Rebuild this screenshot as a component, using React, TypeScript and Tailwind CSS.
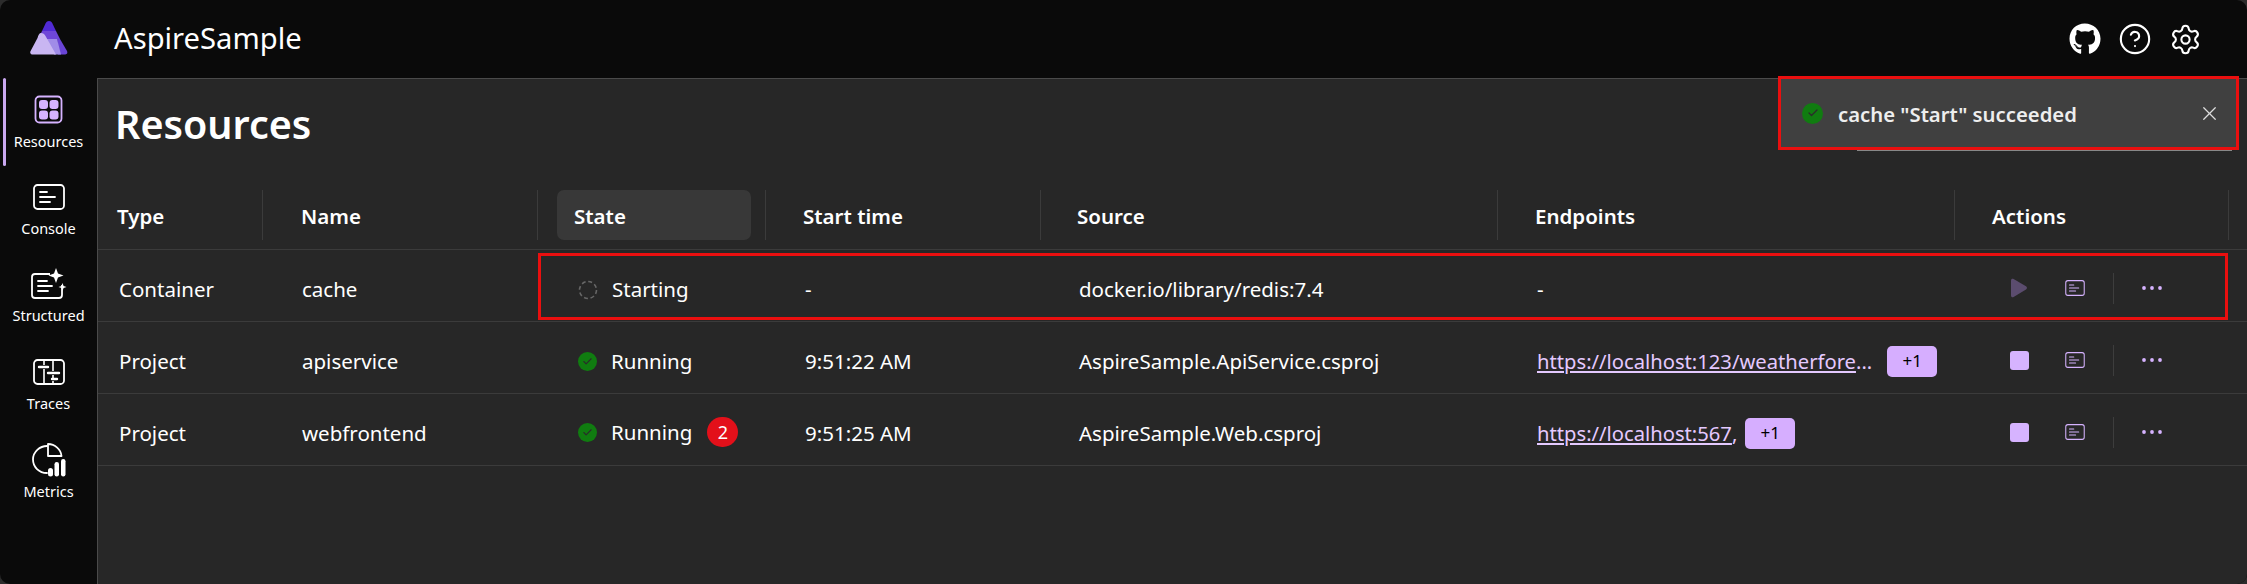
import { X, Settings, CircleHelp, Check } from "lucide-react";
import { FaGithub } from "react-icons/fa";

const accent = "#d6b3ff";

function Logo() {
  return (
    <svg width="38" height="34" viewBox="0 0 38 34" className="block">
      <path d="M19 0 C20.5 0 21.5 .8 22.3 2.2 L26 10 L12 10 L15.7 2.2 C16.5 .8 17.5 0 19 0Z" fill="#512bd4" />
      <path d="M12 10 H26 L30 18 H8 Z" fill="#6f47d8" />
      <path d="M27 18 H30 L37 30 C38 32.5 36.5 33.5 34.5 33.5 H28 Z" fill="#6a45d6" />
      <path d="M16 18 H27 L31 33.5 H24 Z" fill="#a08ce8" />
      <path d="M11 12 C13 12 14.5 13 15.5 15 L26 33.5 H3 C.8 33.5 -.5 32 .6 30 L7.5 17 C8.5 13.5 9.5 12 11 12Z" fill="#c9b6f2" />
    </svg>
  );
}

function ResourcesIcon() {
  return (
    <svg width="30" height="30" viewBox="0 0 30 30" fill="none">
      <rect x="1.5" y="1.5" width="26" height="26" rx="4" stroke={accent} strokeWidth="1.8" />
      <rect x="5" y="5" width="9" height="9" rx="3" fill={accent} />
      <rect x="15.5" y="5" width="9" height="9" rx="3" fill={accent} />
      <rect x="5" y="15.5" width="9" height="9" rx="3" fill={accent} />
      <rect x="15.5" y="15.5" width="9" height="9" rx="3" fill={accent} />
    </svg>
  );
}

function ConsoleIcon({ color = "#fff", w = 32, h = 26, sw = 1.8 }: { color?: string; w?: number; h?: number; sw?: number }) {
  return (
    <svg width={w} height={h} viewBox="0 0 32 26" fill="none">
      <rect x="1" y="1" width="30" height="24" rx="3.5" stroke={color} strokeWidth={sw} />
      <path d="M7 8 H14 M7 13 H22 M7 18 H17" stroke={color} strokeWidth={sw} strokeLinecap="round" />
    </svg>
  );
}

function StructuredIcon() {
  return (
    <svg width="36" height="32" viewBox="0 0 36 32" fill="none">
      <path d="M19 6 H4 C2.3 6 1 7.3 1 9 V27 C1 28.7 2.3 30 4 30 H28 C29.7 30 31 28.7 31 27 V17" stroke="#fff" strokeWidth="1.8" />
      <path d="M7 13 H16 M7 18 H21 M7 23 H17" stroke="#fff" strokeWidth="1.8" strokeLinecap="round" />
      <path d="M25 0 L27 5.5 L32.5 7.5 L27 9.5 L25 15 L23 9.5 L17.5 7.5 L23 5.5Z" fill="#fff" />
      <path d="M31.5 15 L32.6 17.9 L35.5 19 L32.6 20.1 L31.5 23 L30.4 20.1 L27.5 19 L30.4 17.9Z" fill="#fff" />
    </svg>
  );
}

function TracesIcon() {
  return (
    <svg width="32" height="26" viewBox="0 0 32 26" fill="none">
      <rect x="1" y="1" width="30" height="24" rx="3.5" stroke="#fff" strokeWidth="1.8" />
      <path d="M11 1 V6 M11 10 V25 M20 1 V12 M20 16 V19 M20 22 V25" stroke="#fff" strokeWidth="1.6" />
      <path d="M6 8 H15 M15 14 H26 M19 20 H24" stroke="#fff" strokeWidth="2.4" strokeLinecap="round" />
    </svg>
  );
}

function MetricsIcon() {
  return (
    <svg width="34" height="34" viewBox="0 0 34 34" fill="none">
      <path d="M15 3 C7.8 3 1 8.8 1 16.5 C1 24 7 30 15 30" stroke="#fff" strokeWidth="1.8" strokeLinecap="round" />
      <path d="M16 1 C23 1 29 6.5 29.5 13 H16 Z" stroke="#fff" strokeWidth="1.8" strokeLinejoin="round" />
      <rect x="16" y="25" width="5" height="8.5" rx="2.5" fill="#fff" />
      <rect x="22.5" y="19" width="4.5" height="14.5" rx="2.2" fill="#fff" />
      <rect x="29" y="16" width="4.5" height="17.5" rx="2.2" fill="#fff" />
    </svg>
  );
}

function Dots() {
  return (
    <svg width="20" height="6" viewBox="0 0 20 6" className="shrink-0">
      <circle cx="2" cy="3" r="1.9" fill={accent} />
      <circle cx="10" cy="3" r="1.9" fill={accent} />
      <circle cx="18" cy="3" r="1.9" fill={accent} />
    </svg>
  );
}

function NavItem({ label, icon, active, h }: { label: string; icon: React.ReactNode; active?: boolean; h: string }) {
  return (
    <div className={`relative flex flex-col items-center justify-center gap-[5px] w-full ${h}`}>
      {active && <div className="absolute left-[3px] top-0 bottom-0 w-[3px] rounded bg-[#c9a8f0]" />}
      <div className="h-[32px] flex items-center justify-center">{icon}</div>
      <div className="text-[14.5px] leading-[20px] text-white">{label}</div>
    </div>
  );
}

function GreenCheck({ large }: { large?: boolean }) {
  return (
    <span className={`flex items-center justify-center rounded-full bg-[#107c10] shrink-0 ${large ? "w-[21px] h-[21px]" : "w-[19px] h-[19px]"}`}>
      <Check size={large ? 12 : 11} strokeWidth={2.4} color="#2b2b2b" />
    </span>
  );
}

function Spinner() {
  return (
    <svg width="20" height="20" viewBox="0 0 20 20" fill="none" className="shrink-0">
      <circle cx="10" cy="10" r="8.5" stroke="#666" strokeWidth="1.6" strokeDasharray="4 2.67" />
    </svg>
  );
}

function Cell({ children, className = "" }: { children?: React.ReactNode; className?: string }) {
  return <div className={`flex items-center h-[71px] ${className}`}>{children}</div>;
}

function Plus() {
  return (
    <span className="flex items-center justify-center w-[50px] h-[31px] rounded-[5px] bg-[#d6aeff] text-black text-[17px]">+1</span>
  );
}

function Actions({ running }: { running: boolean }) {
  return (
    <div className="flex items-center pl-[54px] h-full">
      <span className="w-[20px] flex justify-center">
        {running ? (
          <span className="block w-[19px] h-[19px] rounded-[3px] bg-[#d6b3ff]" />
        ) : (
          <svg width="18" height="20" viewBox="0 0 18 20"><path d="M1 2.5 C1 1 2.3 .3 3.6 1 L16 8.3 C17.3 9 17.3 10.6 16 11.4 L3.6 19 C2.3 19.7 1 19 1 17.5Z" fill="#5b4c6e" /></svg>
        )}
      </span>
      <span className="ml-[35px] flex">
        <ConsoleIcon color={accent} w={22} h={16} sw={1.7} />
      </span>
      <span className="ml-[27px] w-px h-[31px] bg-[#3d3d3d]" />
      <span className="ml-[28px] flex"><Dots /></span>
    </div>
  );
}

const cols = "grid grid-cols-[165px_275px_228px_275px_457px_457px_274px_1fr]";

function Row({ type, name, state, time, source, ep, running }: { type: string; name: string; state: React.ReactNode; time: string; source: string; ep: React.ReactNode; running: boolean }) {
  return (
    <div className={`${cols} border-b border-[#3b3b3b] h-[72px] text-[20.5px] text-white`}>
      <Cell className="pl-[21px] pt-[8px]">{type}</Cell>
      <Cell className="pl-[39px] pt-[8px]">{name}</Cell>
      <Cell className="pl-[40px] pt-[8px]">{state}</Cell>
      <Cell className="pl-[39px] pt-[8px]">{time}</Cell>
      <Cell className="pl-[38px] pt-[8px]">{source}</Cell>
      <Cell className="pl-[39px] pt-[7px]">{ep}</Cell>
      <Cell className="pt-[5px]"><Actions running={running} /></Cell>
      <Cell />
    </div>
  );
}

function Head({ label, pad, sep = true, active }: { label: string; pad: string; sep?: boolean; active?: boolean }) {
  return (
    <div className={`flex items-center h-[50px] font-semibold text-[20.5px] text-white ${sep ? "border-r border-[#3b3b3b]" : ""}`}>
      {active ? (
        <div className="ml-[19px] mr-[14px] flex-1 h-[50px] rounded-[7px] bg-[#383838] flex items-center pl-[17px] pt-[3px]">{label}</div>
      ) : (
        <span className={`pt-[3px] ${pad}`}>{label}</span>
      )}
    </div>
  );
}

export default function App() {
  return (
    <div className="relative w-[2247px] h-[584px] overflow-hidden bg-[#2c2c2c] font-['Noto_Sans','Open_Sans',sans-serif]">
      <div className="relative w-full h-full rounded-[10px] overflow-hidden bg-[#0a0a0a] flex flex-col">
        <header className="h-[78px] shrink-0 flex items-center">
          <div className="w-[97px] flex justify-center -mt-[3px]"><Logo /></div>
          <div className="ml-[17px] text-[29.2px] text-white leading-none">AspireSample</div>
          <div className="ml-auto mr-[45px] flex items-center gap-[17px] text-white">
            <FaGithub size={32} />
            <CircleHelp size={34} strokeWidth={1.5} />
            <Settings size={33} strokeWidth={1.5} />
          </div>
        </header>
        <div className="flex flex-1 min-h-0">
          <nav className="w-[97px] shrink-0 flex flex-col">
            <NavItem active label="Resources" h="h-[88px]" icon={<ResourcesIcon />} />
            <NavItem label="Console" h="h-[87px]" icon={<ConsoleIcon />} />
            <NavItem label="Structured" h="h-[87px]" icon={<StructuredIcon />} />
            <NavItem label="Traces" h="h-[88px]" icon={<TracesIcon />} />
            <NavItem label="Metrics" h="h-[88px]" icon={<MetricsIcon />} />
          </nav>
          <main className="flex-1 bg-[#272727] border-t border-l border-[#4a4a4a]">
            <div className="h-[111px] flex items-center justify-between pl-[17px] pr-[15px]">
              <h1 className="text-[39.5px] font-semibold text-white leading-none -mt-[20px]">Resources</h1>
              <div className="w-[375px] h-[33px] border-b border-[#888]" />
            </div>
            <div className={`${cols} items-center h-[60px] pb-[10px] border-b border-[#3b3b3b]`}>
              <Head label="Type" pad="pl-[19px]" />
              <Head label="Name" pad="pl-[38px]" />
              <Head label="State" pad="" active />
              <Head label="Start time" pad="pl-[37px]" />
              <Head label="Source" pad="pl-[36px]" />
              <Head label="Endpoints" pad="pl-[37px]" />
              <Head label="Actions" pad="pl-[37px]" />
              <div />
            </div>
            <Row type="Container" name="cache" time="-" source="docker.io/library/redis:7.4" ep="-" running={false}
              state={<div className="flex items-center gap-[14px]"><Spinner /><span>Starting</span></div>} />
            <Row type="Project" name="apiservice" time="9:51:22 AM" source="AspireSample.ApiService.csproj" running
              state={<div className="flex items-center gap-[14px]"><GreenCheck /><span>Running</span></div>}
              ep={<div className="flex items-center gap-[15px]"><span className="text-[#e4c9ff] text-[20.2px]"><span className="underline">https://localhost:123/weatherfore</span>...</span><Plus /></div>} />
            <Row type="Project" name="webfrontend" time="9:51:25 AM" source="AspireSample.Web.csproj" running
              state={<div className="flex items-center gap-[14px] -mt-[3px]"><GreenCheck /><span>Running</span><span className="ml-[1px] flex items-center justify-center w-[31px] h-[30px] rounded-full bg-[#e3101a] text-[18px]">2</span></div>}
              ep={<div className="flex items-center gap-[8px]"><span className="text-[#e4c9ff] text-[20.2px]"><span className="underline">https://localhost:567</span>,</span><Plus /></div>} />
          </main>
        </div>
      </div>

      {/* Annotation outlines */}
      <div className="absolute left-[538px] top-[253px] w-[1690px] h-[67px] border-[3px] border-[#ea0f0f]" />
      <div className="absolute left-[1778px] top-[76px] w-[461px] h-[74px] border-[3px] border-[#ea0f0f] bg-[#404040] flex items-center pl-[21px] pr-[15px]">
        <GreenCheck large />
        <span className="ml-[15px] mt-[3px] text-[20.3px] font-semibold text-[#eeeeee]">cache "Start" succeeded</span>
        <X className="ml-auto" size={23} strokeWidth={1.3} color="#ddd" />
      </div>
    </div>
  );
}
